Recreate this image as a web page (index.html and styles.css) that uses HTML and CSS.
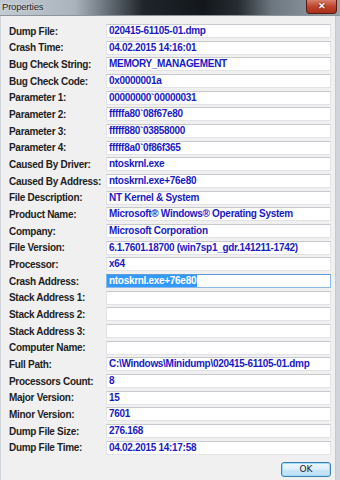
FILE: index.html
```html
<!DOCTYPE html>
<html lang="en">
<head>
    <meta charset="UTF-8">
    <meta name="viewport" content="width=device-width, initial-scale=1.0">
    <title>Properties</title>
    <link rel="stylesheet" href="styles.css">
</head>
<body>
    <div class="window">
        <div class="titlebar">
            <span class="title">Properties</span>
            <span class="close">&#x2715;</span>
        </div>

        <div class="client">
            <div class="fields">
                <label>Dump File:</label><div class="box">020415-61105-01.dmp</div>
                <label>Crash Time:</label><div class="box">04.02.2015 14:16:01</div>
                <label>Bug Check String:</label><div class="box">MEMORY_MANAGEMENT</div>
                <label>Bug Check Code:</label><div class="box">0x0000001a</div>
                <label>Parameter 1:</label><div class="box">00000000`00000031</div>
                <label>Parameter 2:</label><div class="box">fffffa80`08f67e80</div>
                <label>Parameter 3:</label><div class="box">fffff880`03858000</div>
                <label>Parameter 4:</label><div class="box">fffff8a0`0f86f365</div>
                <label>Caused By Driver:</label><div class="box">ntoskrnl.exe</div>
                <label>Caused By Address:</label><div class="box">ntoskrnl.exe+76e80</div>
                <label>File Description:</label><div class="box">NT Kernel &amp; System</div>
                <label>Product Name:</label><div class="box">Microsoft® Windows® Operating System</div>
                <label>Company:</label><div class="box">Microsoft Corporation</div>
                <label>File Version:</label><div class="box">6.1.7601.18700 (win7sp1_gdr.141211-1742)</div>
                <label>Processor:</label><div class="box">x64</div>
                <label>Crash Address:</label><div class="box focused"><span class="sel">ntoskrnl.exe+76e80</span></div>
                <label>Stack Address 1:</label><div class="box"></div>
                <label>Stack Address 2:</label><div class="box"></div>
                <label>Stack Address 3:</label><div class="box"></div>
                <label>Computer Name:</label><div class="box"></div>
                <label>Full Path:</label><div class="box">C:\Windows\Minidump\020415-61105-01.dmp</div>
                <label>Processors Count:</label><div class="box">8</div>
                <label>Major Version:</label><div class="box">15</div>
                <label>Minor Version:</label><div class="box">7601</div>
                <label>Dump File Size:</label><div class="box">276.168</div>
                <label>Dump File Time:</label><div class="box">04.02.2015 14:17:58</div>
            </div>

            <div class="buttons">
                <button type="button" class="btn">OK</button>
            </div>
        </div>
    </div>
</body>
</html>
```

FILE: styles.css
```css
body {
    margin: 0;
    background: #f0f0f0;
    font-family: "Liberation Sans", Arial, sans-serif;
}

.window {
    width: 340px;
    height: 480px;
    overflow: hidden;
    display: flex;
    flex-direction: column;
    background: #cfd5db;
}

.titlebar {
    height: 15px;
    flex: none;
    display: flex;
    align-items: flex-start;
    justify-content: space-between;
    border-bottom: 1px solid #8d949b;
    background: linear-gradient(90deg, #c3cbd2 0%, #aab3bc 22%, #5d666f 33%, #1f252b 42%, #13171b 60%, #262c32 70%, #6d7780 80%, #9aa4ad 100%);
}

.title {
    font-size: 9.5px;
    line-height: 13px;
    padding-left: 2px;
    letter-spacing: -0.2px;
    color: #202428;
    text-shadow: 0 0 3px rgba(255, 255, 255, 0.8);
}

.close {
    width: 29px;
    height: 13px;
    margin-right: 3px;
    border: 1px solid #5a1a12;
    border-top: none;
    border-radius: 0 0 4px 4px;
    background: linear-gradient(#d8806c, #c0442c 50%, #a8301c);
    color: #fff;
    font-size: 9px;
    line-height: 12px;
    font-weight: bold;
    text-align: center;
    text-shadow: 0 0 2px #3a0a04;
}

.client {
    flex: 1;
    margin: 0 4px 0 1px;
    padding: 8px 4px 0 8px;
    background: #f0f0f0;
    border-right: 1px solid #c4cad0;
}

.fields {
    display: grid;
    grid-template-columns: 97px 1fr;
    grid-auto-rows: 14px;
    row-gap: 2.68px;
    align-items: center;
}

.fields label {
    font-size: 10px;
    font-weight: bold;
    letter-spacing: -0.3px;
    color: #1e1e1e;
    white-space: nowrap;
}

.box {
    height: 14px;
    box-sizing: border-box;
    background: #fff;
    border: 1px solid #e1e3e6;
    border-top-color: #c6c9cd;
    padding-left: 2px;
    font-size: 10px;
    line-height: 12px;
    font-weight: bold;
    letter-spacing: -0.3px;
    color: #1a1ac4;
    white-space: nowrap;
    overflow: hidden;
}

.box.focused {
    border-color: #8ab9e6;
    border-top-color: #5d9ad6;
    padding-left: 0;
}

.sel {
    display: inline-block;
    height: 12px;
    padding: 0 1px 0 2px;
    background: #3399ff;
    color: #fff;
}

.buttons {
    display: flex;
    justify-content: flex-end;
    padding-top: 7px;
}

.btn {
    width: 50px;
    height: 15px;
    padding: 0;
    border: 1px solid #3c7fb1;
    border-radius: 3px;
    background: linear-gradient(#eef7fc, #dceef9 50%, #c8e5f6 51%, #bfe0f4);
    box-shadow: inset 0 0 0 1px #9edcf8;
    font-family: "DejaVu Sans", sans-serif;
    font-size: 9px;
    line-height: 13px;
    color: #222;
}
```
